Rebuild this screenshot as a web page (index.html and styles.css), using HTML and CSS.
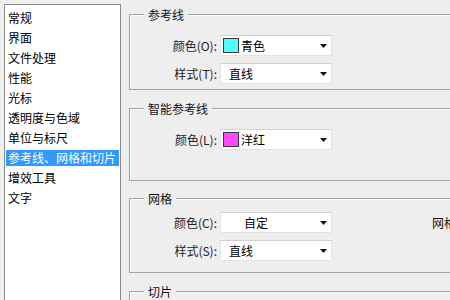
FILE: index.html
```html
<!DOCTYPE html>
<html lang="zh">
<head>
<meta charset="utf-8">
<title>首选项</title>
<link rel="stylesheet" href="styles.css">
</head>
<body>
<div class="dialog">
  <ul class="nav">
    <li>常规</li>
    <li>界面</li>
    <li>文件处理</li>
    <li>性能</li>
    <li>光标</li>
    <li>透明度与色域</li>
    <li>单位与标尺</li>
    <li class="active">参考线、网格和切片</li>
    <li>增效工具</li>
    <li>文字</li>
  </ul>
  <div class="panel">
    <section class="group g1">
      <div class="group-title">参考线</div>
      <div class="rows">
        <div class="row">
          <span class="label">颜色(O):</span>
          <div class="select"><span class="swatch cyan"></span><span class="value">青色</span><svg class="arrow" width="7" height="4" viewBox="0 0 7 4"><polygon points="0,0 7,0 3.5,4" fill="#111"/></svg></div>
        </div>
        <div class="row">
          <span class="label">样式(T):</span>
          <div class="select"><span class="value pad">直线</span><svg class="arrow" width="7" height="4" viewBox="0 0 7 4"><polygon points="0,0 7,0 3.5,4" fill="#111"/></svg></div>
        </div>
      </div>
    </section>
    <section class="group g2">
      <div class="group-title">智能参考线</div>
      <div class="rows">
        <div class="row">
          <span class="label">颜色(L):</span>
          <div class="select"><span class="swatch magenta"></span><span class="value">洋红</span><svg class="arrow" width="7" height="4" viewBox="0 0 7 4"><polygon points="0,0 7,0 3.5,4" fill="#111"/></svg></div>
        </div>
      </div>
    </section>
    <section class="group g3">
      <div class="group-title">网格</div>
      <div class="rows">
        <div class="row">
          <span class="label">颜色(C):</span>
          <div class="select"><span class="value custom">自定</span><svg class="arrow" width="7" height="4" viewBox="0 0 7 4"><polygon points="0,0 7,0 3.5,4" fill="#111"/></svg></div>
          <span class="side-label">网格线间隔(D):</span>
        </div>
        <div class="row">
          <span class="label">样式(S):</span>
          <div class="select"><span class="value pad">直线</span><svg class="arrow" width="7" height="4" viewBox="0 0 7 4"><polygon points="0,0 7,0 3.5,4" fill="#111"/></svg></div>
        </div>
      </div>
    </section>
    <section class="group g4">
      <div class="group-title">切片</div>
      <div class="rows"></div>
    </section>
  </div>
</div>
</body>
</html>
```

FILE: styles.css
```css
html, body {
  margin: 0;
  padding: 0;
  width: 450px;
  height: 300px;
  overflow: hidden;
  background: #eeeeee;
  font-family: "Noto Sans CJK SC", "Liberation Sans", sans-serif;
  font-size: 12px;
  color: #111;
}

.dialog {
  display: flex;
  align-items: flex-start;
  padding: 4px 0 0 4px;
  height: 296px;
}

.nav {
  list-style: none;
  margin: 0;
  padding: 5px 1px 0 1px;
  width: 113px;
  height: 320px;
  flex: none;
  background: #ffffff;
  border: 1px solid #8a8a8a;
  display: flex;
  flex-direction: column;
  gap: 4px;
}

.nav li {
  height: 16px;
  line-height: 16px;
  padding-left: 2px;
  white-space: nowrap;
  color: #000;
}

.nav li.active {
  background: #3399ff;
  color: #ffffff;
}

.panel {
  flex: none;
  width: 400px;
  margin-left: 8px;
  margin-top: -4px;
  display: flex;
  flex-direction: column;
}

.group {
  border: 1px solid #a3a3a3;
  box-shadow: inset 1px 1px 0 #fafafa;
}

.g1 { margin-top: 14px; }
.g2 { margin-top: 18px; }
.g3 { margin-top: 17px; }
.g4 { margin-top: 18px; }

.group-title {
  display: table;
  margin: -8px 0 0 14px;
  padding: 0 4px;
  background: #eeeeee;
  line-height: 16px;
  color: #111;
}

.rows {
  display: flex;
  flex-direction: column;
  gap: 7px;
}

.g1 .rows { padding: 12px 0 5px; }
.g2 .rows { padding: 12px 0 30px; }
.g3 .rows { padding: 5px 0 11px; }
.g4 .rows { height: 30px; }

.row {
  display: flex;
  align-items: center;
  height: 21px;
}

.label {
  width: 87px;
  text-align: right;
  margin-right: 3px;
  color: #222;
  white-space: nowrap;
}

.select {
  width: 112px;
  height: 21px;
  box-sizing: border-box;
  background: #ffffff;
  border: 1px solid #e2e2e2;
  border-top-color: #cfcfcf;
  display: flex;
  align-items: center;
  padding-left: 2px;
}

.swatch {
  width: 14px;
  height: 13px;
  border: 1px solid #3a3a3a;
  margin-right: 2px;
  flex: none;
}

.cyan { background: #55fcfc; }
.magenta { background: #ff47ff; }

.value {
  flex: 1;
  color: #000;
  line-height: 16px;
}

.value.pad { padding-left: 6px; }
.value.custom { padding-left: 21px; }

.arrow {
  flex: none;
  margin-right: 4px;
}

.side-label {
  margin-left: 100px;
  white-space: nowrap;
  color: #111;
}
```
